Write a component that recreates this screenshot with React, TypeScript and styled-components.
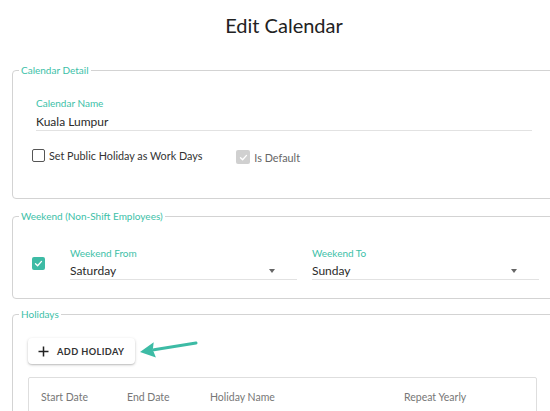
import React from "react";
import styled, { createGlobalStyle } from "styled-components";

const GlobalStyle = createGlobalStyle`
  html, body {
    margin: 0;
    padding: 0;
    background: #fff;
    overflow: hidden;
  }
  body {
    font-family: Lato, "Noto Sans", sans-serif;
    color: #333;
  }
`;

const teal = "#3cbfa8";

const Page = styled.div`
  width: 568px;
  box-sizing: border-box;
  padding: 0 12px 40px;
`;

const Title = styled.h1`
  margin: 0 0 27px;
  padding-top: 13px;
  height: 24px;
  line-height: 24px;
  font-size: 20px;
  font-weight: 400;
  text-align: center;
  color: #222;
`;

const Section = styled.fieldset<{ $gap?: number }>`
  margin: ${(p) => p.$gap ?? 0}px 0 0;
  padding: 0;
  border: 1px solid #d3d3d3;
  border-radius: 4px;
  min-width: 0;
`;

const Legend = styled.legend`
  margin-left: 6px;
  padding: 0 2px;
  font-size: 10px;
  line-height: 12px;
  color: ${teal};
`;

const Body = styled.div<{ $pad: string }>`
  padding: ${(p) => p.$pad};
`;

const Field = styled.div<{ $width?: number; $ml?: number }>`
  display: flex;
  flex-direction: column;
  width: ${(p) => (p.$width ? `${p.$width}px` : "auto")};
  margin-left: ${(p) => p.$ml ?? 0}px;
  flex: ${(p) => (p.$width ? "none" : "1")};
`;

const FieldLabel = styled.label<{ $gap: number }>`
  font-size: 10px;
  line-height: 12px;
  color: ${teal};
  margin-bottom: ${(p) => p.$gap}px;
`;

const Value = styled.div`
  position: relative;
  font-size: 12px;
  line-height: 16px;
  color: #2a2a2a;
  border-bottom: 1px solid #e2e2e2;
`;

const Caret = styled.span`
  position: absolute;
  right: 22px;
  top: 6px;
  width: 0;
  height: 0;
  border-left: 3.5px solid transparent;
  border-right: 3.5px solid transparent;
  border-top: 4px solid #666;
`;

const CheckRow = styled.div`
  display: flex;
  align-items: flex-start;
  margin-top: 18px;
`;

const CheckItem = styled.div<{ $ml?: number; $mt?: number }>`
  display: flex;
  align-items: center;
  gap: 4px;
  margin-left: ${(p) => p.$ml ?? 0}px;
  margin-top: ${(p) => p.$mt ?? 0}px;
`;

const Box = styled.span<{ $variant: "off" | "on" | "disabled"; $size?: number }>`
  box-sizing: border-box;
  display: inline-flex;
  align-items: center;
  justify-content: center;
  width: ${(p) => p.$size ?? 13}px;
  height: ${(p) => p.$size ?? 13}px;
  border-radius: 2px;
  border: ${(p) => (p.$variant === "off" ? "1.5px solid #555" : "none")};
  background: ${(p) =>
    p.$variant === "on" ? "#3dbba5" : p.$variant === "disabled" ? "#d0d0d0" : "#fff"};
  flex: none;
`;

const CheckText = styled.span<{ $muted?: boolean }>`
  font-size: 10.8px;
  line-height: 13px;
  color: ${(p) => (p.$muted ? "#666" : "#333")};
`;

const WeekendRow = styled.div`
  display: flex;
  align-items: center;
`;

const ButtonRow = styled.div`
  display: flex;
  align-items: center;
`;

const AddButton = styled.button`
  display: inline-flex;
  align-items: center;
  gap: 8px;
  height: 26px;
  padding: 0 11px 0 10px;
  border: none;
  border-radius: 4px;
  background: #fff;
  box-shadow: 0 1px 3px rgba(0, 0, 0, 0.22), 0 1px 1px rgba(0, 0, 0, 0.08);
  font-family: inherit;
  font-size: 9.2px;
  font-weight: 700;
  letter-spacing: 0.4px;
  color: #333;
  cursor: pointer;
`;

const Table = styled.div`
  margin-top: 13px;
  border: 1px solid #dedede;
  border-radius: 2px;
  padding: 12px 0 14px 12px;
  width: 509px;
  box-sizing: border-box;
`;

const HeadRow = styled.div`
  display: grid;
  grid-template-columns: 86px 83px 194px 1fr;
`;

const HeadCell = styled.div`
  font-size: 10.5px;
  line-height: 14px;
  color: #777;
`;

const Check = ({ size = 9 }: { size?: number }) => (
  <svg width={size} height={size} viewBox="0 0 12 12">
    <path d="M2 6.3 L4.8 9 L10 3.2" fill="none" stroke="#fff" strokeWidth="1.8" strokeLinecap="round" strokeLinejoin="round" />
  </svg>
);

const Plus = () => (
  <svg width="11" height="11" viewBox="0 0 11 11">
    <path d="M5.5 0.5 V10.5 M0.5 5.5 H10.5" stroke="#222" strokeWidth="1.5" />
  </svg>
);

const PointerArrow = () => (
  <svg width="62" height="26" viewBox="0 0 62 26" style={{ marginLeft: 2 }}>
    <path d="M17 11.7 L59 5" stroke="#3dbba5" strokeWidth="3" strokeLinecap="round" />
    <path d="M3 14 L18.9 19.5 L15.8 11.8 L16.7 4.2 Z" fill="#3dbba5" />
  </svg>
);

const App: React.FC = () => {
  return (
    <Page>
      <GlobalStyle />
      <Title>Edit Calendar</Title>

      <Section>
        <Legend>Calendar Detail</Legend>
        <Body $pad="21px 23px 34px 19px">
          <Field $ml={4}>
            <FieldLabel $gap={5}>Calendar Name</FieldLabel>
            <Value>Kuala Lumpur</Value>
          </Field>
          <CheckRow>
            <CheckItem>
              <Box $variant="off" />
              <CheckText>Set Public Holiday as Work Days</CheckText>
            </CheckItem>
            <CheckItem $ml={34} $mt={1}>
              <Box $variant="disabled" $size={14}>
                <Check />
              </Box>
              <CheckText $muted>Is Default</CheckText>
            </CheckItem>
          </CheckRow>
        </Body>
      </Section>

      <Section $gap={11}>
        <Legend>Weekend (Non-Shift Employees)</Legend>
        <Body $pad="25px 17px 18px 19px">
          <WeekendRow>
            <Box $variant="on">
              <Check />
            </Box>
            <Field $width={227} $ml={25}>
              <FieldLabel $gap={4}>Weekend From</FieldLabel>
              <Value>
                Saturday
                <Caret />
              </Value>
            </Field>
            <Field $width={227} $ml={15}>
              <FieldLabel $gap={4}>Weekend To</FieldLabel>
              <Value>
                Sunday
                <Caret />
              </Value>
            </Field>
          </WeekendRow>
        </Body>
      </Section>

      <Section $gap={9}>
        <Legend>Holidays</Legend>
        <Body $pad="18px 17px 20px 15px">
          <ButtonRow>
            <AddButton>
              <Plus />
              ADD HOLIDAY
            </AddButton>
            <PointerArrow />
          </ButtonRow>
          <Table>
            <HeadRow>
              <HeadCell>Start Date</HeadCell>
              <HeadCell>End Date</HeadCell>
              <HeadCell>Holiday Name</HeadCell>
              <HeadCell>Repeat Yearly</HeadCell>
            </HeadRow>
          </Table>
        </Body>
      </Section>
    </Page>
  );
};

export default App;
